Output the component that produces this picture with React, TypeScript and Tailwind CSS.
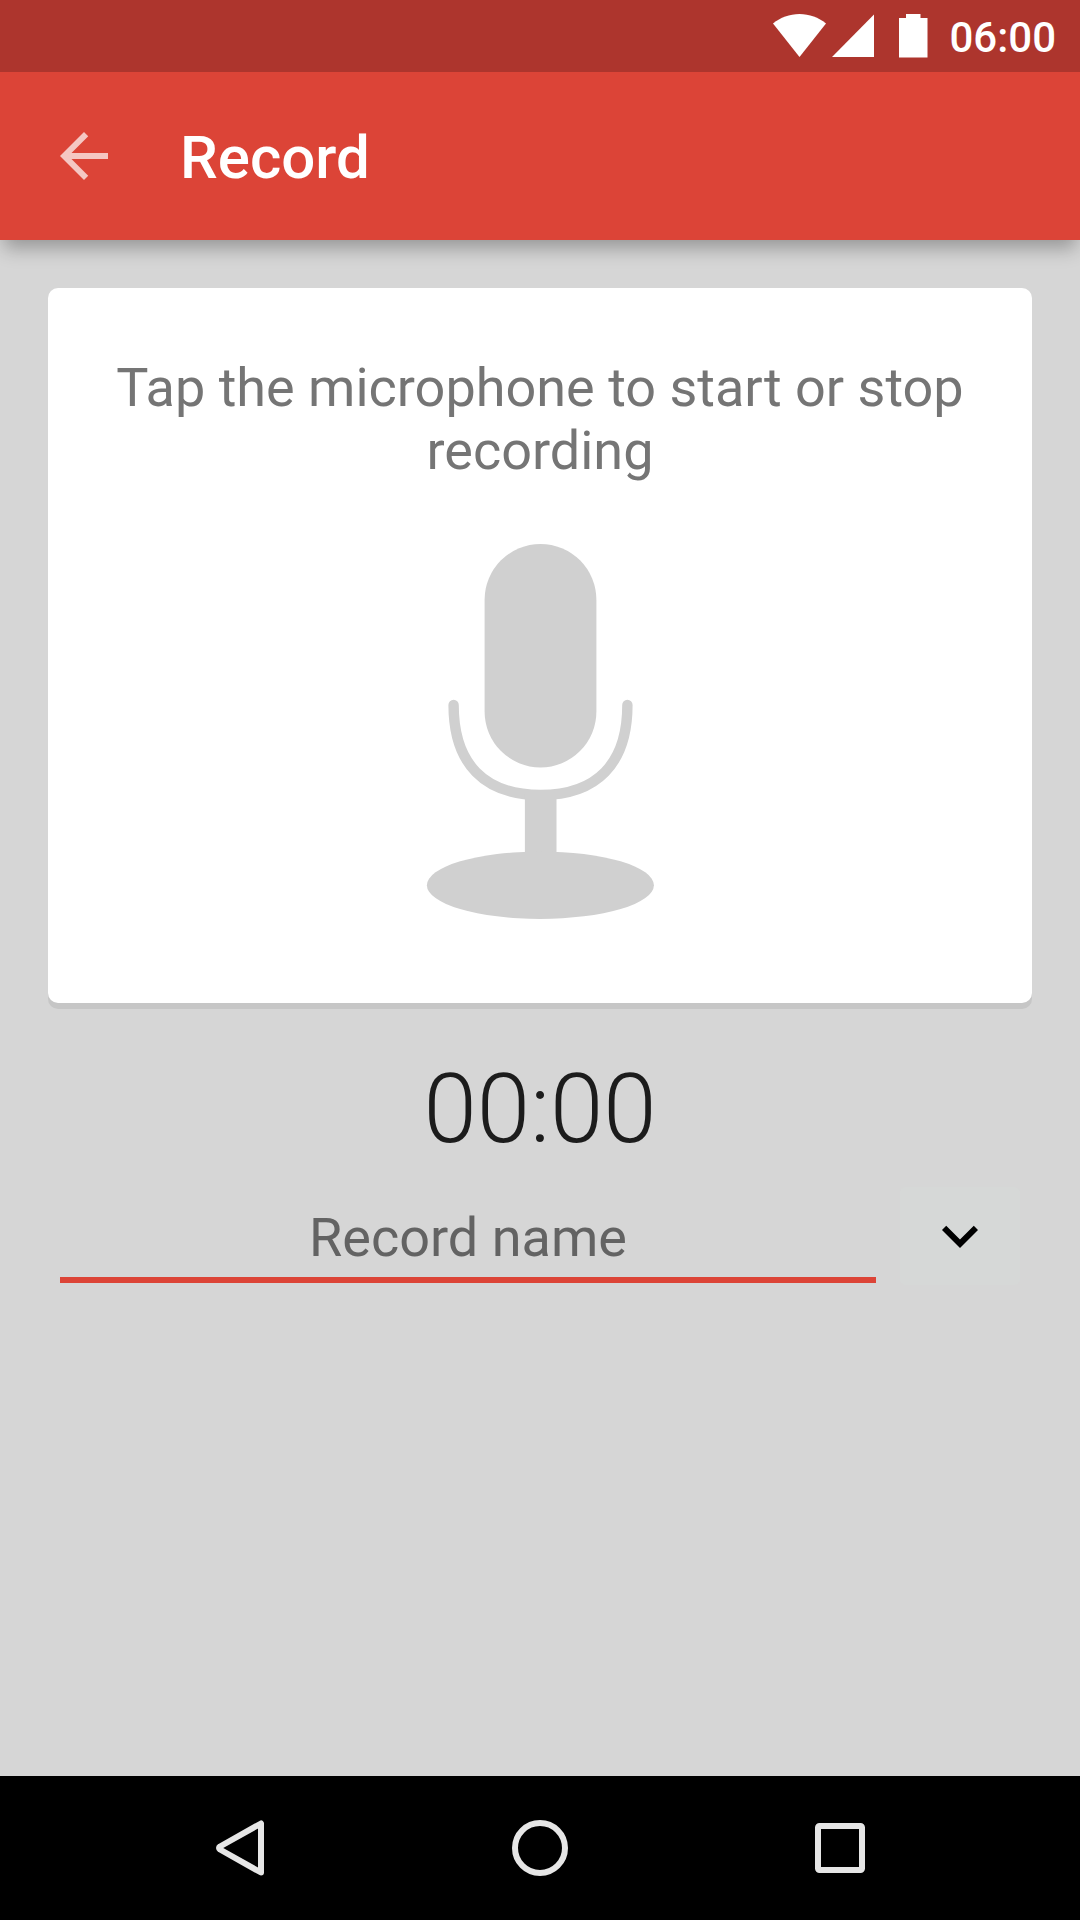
import { useEffect, useState } from "react";

const formatTime = (seconds: number) => {
  const m = String(Math.floor(seconds / 60)).padStart(2, "0");
  const s = String(seconds % 60).padStart(2, "0");
  return `${m}:${s}`;
};

function StatusBar() {
  return (
    <div className="flex h-[72px] items-center justify-end bg-[#ad352d] pr-6 text-white">
      {/* Wifi */}
      <svg className="h-[44px] w-[53px]" viewBox="0 0 53 44" fill="currentColor">
        <path d="M0 9.5C7.5 3.5 16.5 0 26.5 0S45.5 3.5 53 9.5L26.5 43Z" />
      </svg>
      {/* Signal */}
      <svg className="ml-1.5 h-[44px] w-[42px]" viewBox="0 0 42 44" fill="currentColor">
        <path d="M42 0.5V43H0Z" />
      </svg>
      {/* Battery */}
      <svg className="ml-6 h-[44px] w-[30px]" viewBox="0 0 30 44" fill="currentColor">
        <path d="M8 0H22.5V4H29.5V43.5H1V4H8Z" />
      </svg>
      <span className="ml-[21px] pt-0.5 text-[42px] font-medium">06:00</span>
    </div>
  );
}

function Header() {
  return (
    <header className="relative z-10 shadow-[0_12px_18px_-4px_rgba(0,0,0,0.3)]">
      <StatusBar />
      <div className="flex h-[168px] items-center gap-[60px] bg-[#dc4437] px-12 text-white">
        <button aria-label="Back" className="text-white/70">
          <svg className="size-[72px]" viewBox="0 0 24 24" fill="currentColor">
            <path d="M20 11H7.83l5.59-5.59L12 4l-8 8 8 8 1.41-1.41L7.83 13H20v-2z" />
          </svg>
        </button>
        <h1 className="pt-1 text-[60px] font-medium">Record</h1>
      </div>
    </header>
  );
}

function NavBar() {
  return (
    <nav className="flex h-36 items-stretch bg-black px-[90px] text-[#e6e6e6]">
      <button aria-label="Back" className="flex flex-1 items-center justify-center">
        <svg className="h-[56px] w-[48px]" viewBox="0 0 48 56" fill="none" stroke="currentColor" strokeWidth="6" strokeLinejoin="round">
          <path d="M45 3.5V52.5L4 29.5Q2 28 4 26.5Z" />
        </svg>
      </button>
      <button aria-label="Home" className="flex flex-1 items-center justify-center">
        <svg className="size-[56px]" viewBox="0 0 56 56" fill="none" stroke="currentColor" strokeWidth="6">
          <circle cx="28" cy="28" r="25" />
        </svg>
      </button>
      <button aria-label="Recent apps" className="flex flex-1 items-center justify-center">
        <svg className="size-[50px]" viewBox="0 0 50 50" fill="none" stroke="currentColor" strokeWidth="6">
          <rect x="3" y="3" width="44" height="44" rx="1.5" />
        </svg>
      </button>
    </nav>
  );
}

export default function App() {
  const [recording, setRecording] = useState(false);
  const [seconds, setSeconds] = useState(0);
  const [name, setName] = useState("");

  useEffect(() => {
    if (!recording) return;
    const timer = setInterval(() => setSeconds((prev) => prev + 1), 1000);
    return () => clearInterval(timer);
  }, [recording]);

  return (
    <div className="flex min-h-screen flex-col bg-[#d6d6d6] font-[Roboto,sans-serif]">
      <Header />

      <main className="flex-1 px-12 pt-12">
        {/* Recorder card */}
        <section className="flex flex-col items-center rounded-[10px] bg-white px-12 pt-[68px] pb-[84px] shadow-[0_6px_0_#c6c6c6]">
          <p className="text-center text-[54px] leading-[63px] text-[#757575]">
            Tap the microphone to start or stop recording
          </p>
          <button
            aria-label="Microphone"
            aria-pressed={recording}
            onClick={() => setRecording(!recording)}
            className={`mt-[62px] ${recording ? "text-[#dc4437]" : "text-[#d0d0d0]"}`}
          >
            <svg className="h-[375px] w-[228px]" viewBox="0 0 228 375" fill="currentColor">
              <rect x="58.6" y="0" width="111.8" height="223.4" rx="55.9" />
              <path
                d="M27.6 161C27.6 220 58.5 251 114.5 251S201.4 220 201.4 161"
                fill="none"
                stroke="currentColor"
                strokeWidth="10.4"
                strokeLinecap="round"
              />
              <path d="M98.9 250h31.6v62H98.9z" />
              <ellipse cx="114.4" cy="341.2" rx="113.5" ry="33.7" />
            </svg>
          </button>
        </section>

        <p className="mt-[50px] text-center text-[96px] leading-[112px] font-light text-[#1c1c1c]">
          {formatTime(seconds)}
        </p>

        {/* Record name */}
        <div className="mt-[22px] flex items-start gap-6 px-3">
          <input
            type="text"
            aria-label="Record name"
            placeholder="Record name"
            value={name}
            onChange={(e) => setName(e.target.value)}
            className="h-[96px] min-w-0 flex-1 border-b-[6px] border-[#dc4437] bg-transparent pt-2.5 text-center text-[54px] text-[#1c1c1c] outline-none placeholder:text-[#636363]"
          />
          <button
            aria-label="Show options"
            className="flex h-[98px] w-[120px] items-center justify-center rounded-md bg-[#d6d8d7] text-black"
          >
            <svg className="size-[72px]" viewBox="0 0 24 24" fill="currentColor">
              <path d="M16.59 8.59L12 13.17 7.41 8.59 6 10l6 6 6-6z" />
            </svg>
          </button>
        </div>
      </main>

      <NavBar />
    </div>
  );
}
